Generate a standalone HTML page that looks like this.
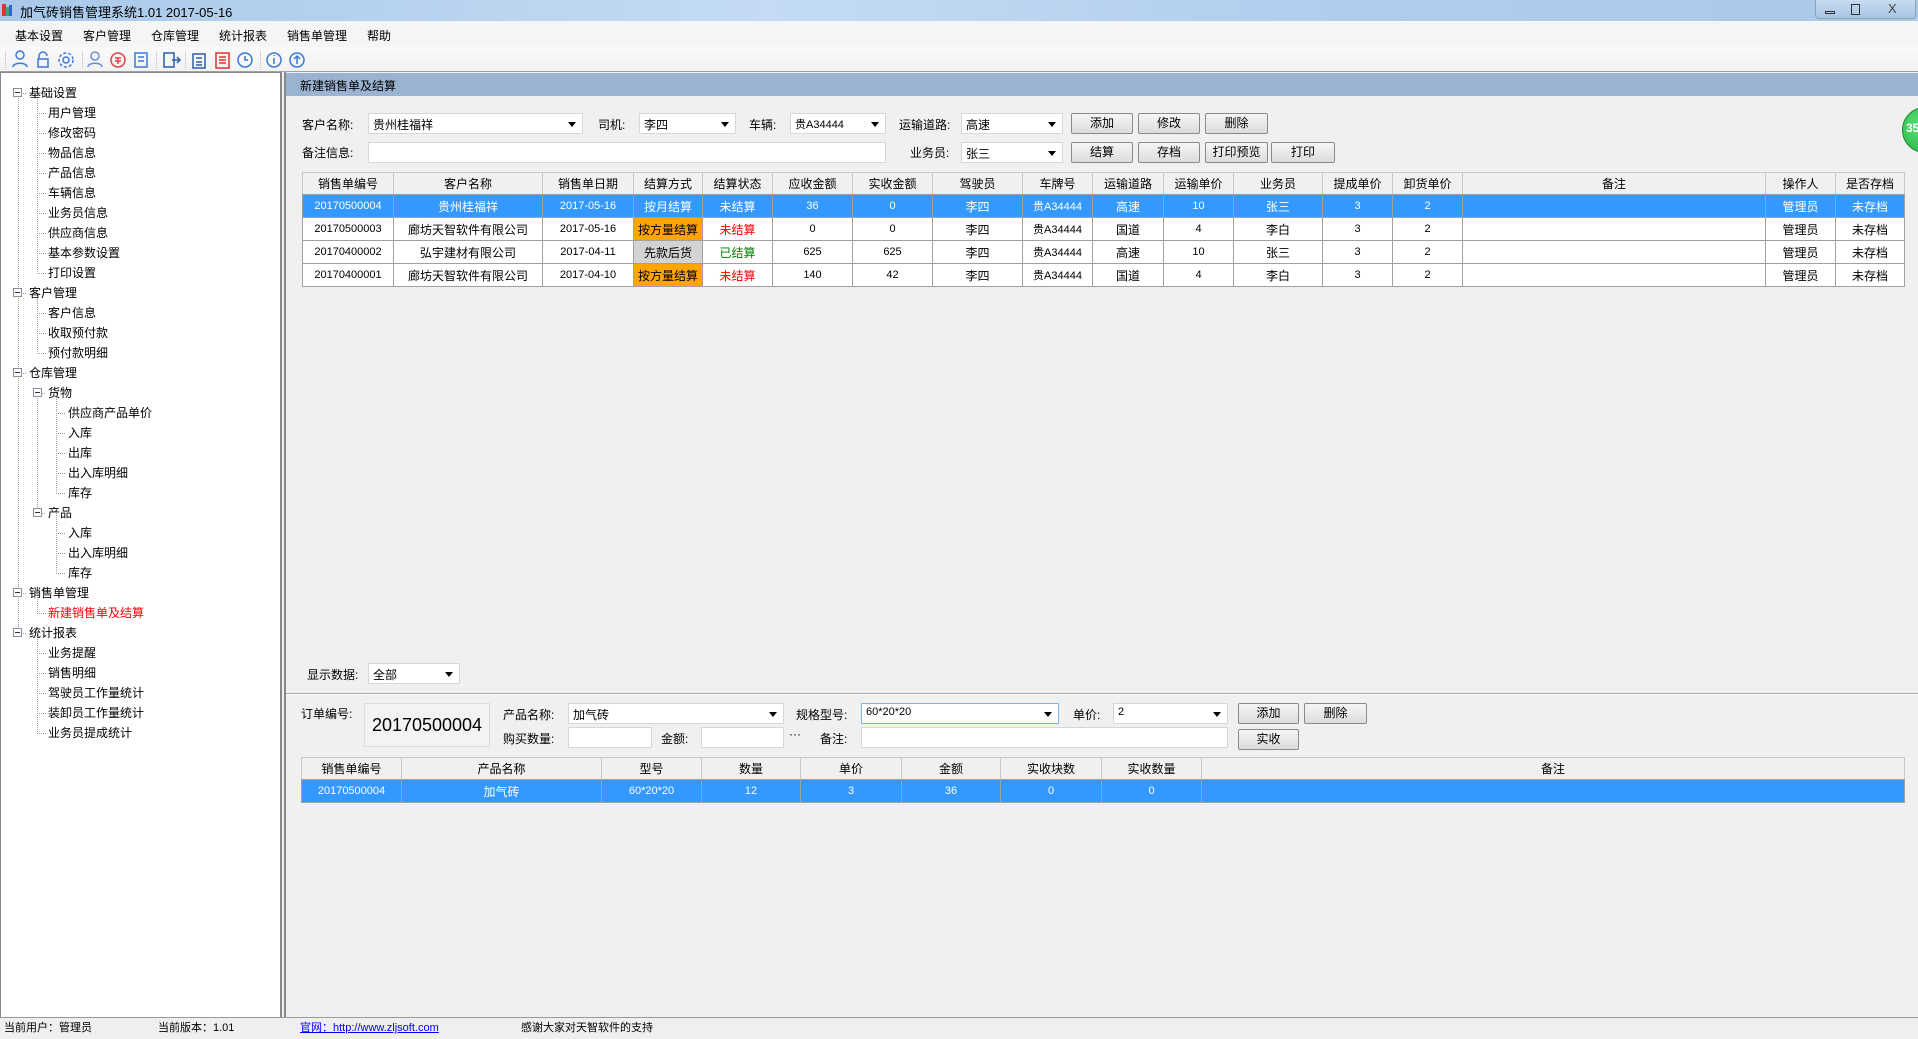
<!DOCTYPE html>
<html><head><meta charset="utf-8"><style>
*{margin:0;padding:0;box-sizing:border-box}
body{width:1918px;height:1039px;position:relative;overflow:hidden;background:#f0f0f0;font-family:"Liberation Sans","Noto Sans CJK SC",sans-serif;font-size:12px;color:#000}
.a{position:absolute;white-space:nowrap}
.title{left:0;top:0;width:1918px;height:21px;background:linear-gradient(90deg,#a9c8ea,#c4dbf3 40%,#b0cdee 70%,#a9c8ea);}
.menu{left:0;top:21px;width:1918px;height:26px;background:#f5f5f5}
.tool{left:0;top:47px;width:1918px;height:25px;background:linear-gradient(#fafafa,#f2f2f2);border-bottom:1px solid #a0a0a0}
.side{left:0;top:72px;width:282px;height:946px;background:#fff;border:1px solid #888;border-right:2px solid #888}
.main{left:284px;top:72px;width:1634px;height:946px;border-left:2px solid #888;background:#f0f0f0}
.hdr{left:286px;top:73px;width:1632px;height:23px;background:#9ab3d1}
.combo{position:absolute;background:#fff;border:1px solid #d7d7d7;height:21px;padding:2px 4px;font-size:12px}
.combo:after{content:"";position:absolute;right:6px;top:8px;border-left:4px solid transparent;border-right:4px solid transparent;border-top:5px solid #000}
.inp{position:absolute;background:#fff;border:1px solid #d7d7d7;height:21px}
.btn{position:absolute;height:21px;border:1px solid #8a8a8a;border-radius:2px;background:linear-gradient(#f6f6f6,#dcdcdc);text-align:center;line-height:19px;font-size:12px}
table{border-collapse:collapse;table-layout:fixed;position:absolute;background:#fff}
td{border:1px solid #a0a0a0;text-align:center;font-size:11px;height:23px;overflow:hidden;white-space:nowrap;padding:0}
tr.h td{background:#f0f0f0;height:22px;font-size:12px;border-color:#c8c8c8 #c8c8c8 #a0a0a0}
tr.s td{background:#3399ff;color:#fff}
.or{background:#ffa500}.gr{background:#d3d3d3}.red{color:#f00}.grn{color:#008000}
.tree div{position:absolute;white-space:nowrap;font-size:12px}
.bx{position:absolute;width:9px;height:9px;border:1px solid #8a8fa0;background:#fff}
.bx:after{content:"";position:absolute;left:1px;top:3px;width:5px;height:1px;background:#333}
.st{top:1018px;height:21px;line-height:21px;font-size:11px}
</style></head><body>
<div class="a title"></div>
<div class="a" style="left:2px;top:4px;width:4px;height:12px;background:#d33"></div>
<div class="a" style="left:6px;top:7px;width:3px;height:9px;background:#3a7"></div>
<div class="a" style="left:9px;top:5px;width:3px;height:11px;background:#36c"></div>
<div class="a" style="left:20px;top:2px;font-size:13px">加气砖销售管理系统1.01 2017-05-16</div>
<div class="a" style="left:1815px;top:0;width:101px;height:19px;border:1px solid #8aa;border-top:0;border-radius:0 0 4px 4px;background:linear-gradient(#c8dcf2,#a8c4e4)"></div>
<div class="a" style="left:1825px;top:11px;width:10px;height:3px;border:1px solid #333"></div>
<div class="a" style="left:1851px;top:4px;width:9px;height:11px;border:1px solid #333"></div>
<div class="a" style="left:1888px;top:1px;font-size:13px;color:#444">X</div>
<div class="a menu"></div>
<div class="a" style="left:15px;top:27px">基本设置</div>
<div class="a" style="left:83px;top:27px">客户管理</div>
<div class="a" style="left:151px;top:27px">仓库管理</div>
<div class="a" style="left:219px;top:27px">统计报表</div>
<div class="a" style="left:287px;top:27px">销售单管理</div>
<div class="a" style="left:367px;top:27px">帮助</div>
<div class="a tool"></div>
<svg class="a" style="left:0;top:47px" width="320" height="25" fill="none" stroke-width="1.5">
<g stroke="#3a7bd5">
<circle cx="20" cy="8" r="4"/><path d="M13 20c0-5 14-5 14 0"/>
<path d="M39 12v-3a4 4 0 0 1 8 0M38 12h10v8H38z"/>
<circle cx="66" cy="13" r="3"/><circle cx="66" cy="13" r="7" stroke-dasharray="3,2"/>
<circle cx="95" cy="9" r="4" stroke="#6b8fd6"/><path d="M88 20c0-5 14-5 14 0" stroke="#6b8fd6"/>
<path d="M135 6h12v14h-12zM138 10h6M138 14h6"/>
<path d="M164 6h10v14h-10zM172 13h8M177 10l3 3-3 3" stroke="#2a5fa8"/>
<path d="M193 7h12v14h-12zM196 11h6M196 15h6M196 18h6" stroke="#2a5fa8"/>
<circle cx="245" cy="13" r="7"/><path d="M245 9v4h3"/>
<circle cx="274" cy="13" r="7"/><path d="M274 11v6M274 8v1"/>
<circle cx="297" cy="13" r="7"/><path d="M297 17v-8M294 12l3-3 3 3"/>
</g>
<circle cx="118" cy="13" r="7" stroke="#d44"/><path d="M115 11h6M115 14h6M118 11v6" stroke="#d44"/>
<path d="M216 6h13v15h-13zM219 10h7M219 13h7M219 16h7" stroke="#d33"/>
<g stroke="#bbb" stroke-width="1"><path d="M82.5 4v18M156.5 4v18M185.5 4v18M260.5 4v18M5.5 4v18" stroke-dasharray="1,1"/></g>
</svg>

<div class="a side"></div>
<svg class="a" id="lines" style="left:0;top:0" width="282" height="1017"></svg>
<div class="tree" id="t"></div>
<div class="a main"></div>
<div class="a hdr"></div>
<div class="a" style="left:300px;top:77px">新建销售单及结算</div>

<div class="a" style="left:302px;top:116px">客户名称:</div>
<div class="combo" style="left:368px;top:113px;width:215px">贵州桂福祥</div>
<div class="a" style="left:598px;top:116px">司机:</div>
<div class="combo" style="left:639px;top:113px;width:97px">李四</div>
<div class="a" style="left:749px;top:116px">车辆:</div>
<div class="combo" style="left:790px;top:113px;width:96px;font-size:11px">贵A34444</div>
<div class="a" style="left:899px;top:116px">运输道路:</div>
<div class="combo" style="left:961px;top:113px;width:102px">高速</div>
<div class="btn" style="left:1071px;top:113px;width:62px">添加</div>
<div class="btn" style="left:1138px;top:113px;width:62px">修改</div>
<div class="btn" style="left:1205px;top:113px;width:63px">删除</div>
<div class="a" style="left:302px;top:144px">备注信息:</div>
<div class="inp" style="left:368px;top:142px;width:518px"></div>
<div class="a" style="left:910px;top:144px">业务员:</div>
<div class="combo" style="left:961px;top:142px;width:102px">张三</div>
<div class="btn" style="left:1071px;top:142px;width:62px">结算</div>
<div class="btn" style="left:1138px;top:142px;width:62px">存档</div>
<div class="btn" style="left:1205px;top:142px;width:63px">打印预览</div>
<div class="btn" style="left:1271px;top:142px;width:64px">打印</div>
<div class="a" style="left:1902px;top:107px;width:46px;height:46px;border-radius:50%;background:radial-gradient(circle at 40% 40%,#5de07a,#1fae3c);border:1px solid #1a8a30"></div>
<div class="a" style="left:1906px;top:121px;color:#fff;font-size:12px;font-weight:bold">35</div>

<table style="left:302px;top:172px;width:1602px">
<colgroup><col style="width:91px"><col style="width:149px"><col style="width:91px"><col style="width:69px"><col style="width:70px"><col style="width:80px"><col style="width:80px"><col style="width:90px"><col style="width:70px"><col style="width:71px"><col style="width:70px"><col style="width:89px"><col style="width:70px"><col style="width:70px"><col style="width:303px"><col style="width:70px"><col style="width:69px"></colgroup>
<tr class="h"><td>销售单编号</td><td>客户名称</td><td>销售单日期</td><td>结算方式</td><td>结算状态</td><td>应收金额</td><td>实收金额</td><td>驾驶员</td><td>车牌号</td><td>运输道路</td><td>运输单价</td><td>业务员</td><td>提成单价</td><td>卸货单价</td><td>备注</td><td>操作人</td><td>是否存档</td></tr>
<tr class="s"><td>20170500004</td><td style="font-size:12px">贵州桂福祥</td><td>2017-05-16</td><td style="font-size:12px">按月结算</td><td style="font-size:12px">未结算</td><td>36</td><td>0</td><td style="font-size:12px">李四</td><td>贵A34444</td><td style="font-size:12px">高速</td><td>10</td><td style="font-size:12px">张三</td><td>3</td><td>2</td><td></td><td style="font-size:12px">管理员</td><td style="font-size:12px">未存档</td></tr>
<tr><td>20170500003</td><td style="font-size:12px">廊坊天智软件有限公司</td><td>2017-05-16</td><td class="or" style="font-size:12px">按方量结算</td><td class="red" style="font-size:12px">未结算</td><td>0</td><td>0</td><td style="font-size:12px">李四</td><td>贵A34444</td><td style="font-size:12px">国道</td><td>4</td><td style="font-size:12px">李白</td><td>3</td><td>2</td><td></td><td style="font-size:12px">管理员</td><td style="font-size:12px">未存档</td></tr>
<tr><td>20170400002</td><td style="font-size:12px">弘宇建材有限公司</td><td>2017-04-11</td><td class="gr" style="font-size:12px">先款后货</td><td class="grn" style="font-size:12px">已结算</td><td>625</td><td>625</td><td style="font-size:12px">李四</td><td>贵A34444</td><td style="font-size:12px">高速</td><td>10</td><td style="font-size:12px">张三</td><td>3</td><td>2</td><td></td><td style="font-size:12px">管理员</td><td style="font-size:12px">未存档</td></tr>
<tr><td>20170400001</td><td style="font-size:12px">廊坊天智软件有限公司</td><td>2017-04-10</td><td class="or" style="font-size:12px">按方量结算</td><td class="red" style="font-size:12px">未结算</td><td>140</td><td>42</td><td style="font-size:12px">李四</td><td>贵A34444</td><td style="font-size:12px">国道</td><td>4</td><td style="font-size:12px">李白</td><td>3</td><td>2</td><td></td><td style="font-size:12px">管理员</td><td style="font-size:12px">未存档</td></tr>
</table>

<div class="a" style="left:307px;top:666px">显示数据:</div>
<div class="combo" style="left:368px;top:663px;width:92px">全部</div>
<div class="a" style="left:286px;top:693px;width:1632px;height:2px;background:#a8a8a8;border-bottom:1px solid #fff"></div>
<div class="a" style="left:301px;top:705px">订单编号:</div>
<div class="a" style="left:364px;top:703px;width:126px;height:44px;border:1px solid #ddd;background:#f3f3f3;font-size:18px;text-align:center;line-height:42px">20170500004</div>
<div class="a" style="left:503px;top:706px">产品名称:</div>
<div class="combo" style="left:568px;top:703px;width:216px">加气砖</div>
<div class="a" style="left:796px;top:706px">规格型号:</div>
<div class="combo" style="left:861px;top:703px;width:198px;border-color:#7eb4ea;font-size:11px">60*20*20</div>
<div class="a" style="left:1073px;top:706px">单价:</div>
<div class="combo" style="left:1113px;top:703px;width:115px;font-size:11px">2</div>
<div class="btn" style="left:1238px;top:703px;width:61px">添加</div>
<div class="btn" style="left:1304px;top:703px;width:63px">删除</div>
<div class="a" style="left:503px;top:730px">购买数量:</div>
<div class="inp" style="left:568px;top:727px;width:84px"></div>
<div class="a" style="left:661px;top:730px">金额:</div>
<div class="inp" style="left:701px;top:727px;width:83px"></div>
<div class="a" style="left:789px;top:727px">···</div>
<div class="a" style="left:820px;top:730px">备注:</div>
<div class="inp" style="left:861px;top:727px;width:367px"></div>
<div class="btn" style="left:1238px;top:729px;width:61px">实收</div>

<table style="left:301px;top:757px;width:1603px">
<colgroup><col style="width:100px"><col style="width:200px"><col style="width:100px"><col style="width:99px"><col style="width:101px"><col style="width:99px"><col style="width:101px"><col style="width:100px"><col style="width:703px"></colgroup>
<tr class="h"><td>销售单编号</td><td>产品名称</td><td>型号</td><td>数量</td><td>单价</td><td>金额</td><td>实收块数</td><td>实收数量</td><td>备注</td></tr>
<tr class="s"><td>20170500004</td><td style="font-size:12px">加气砖</td><td>60*20*20</td><td>12</td><td>3</td><td>36</td><td>0</td><td>0</td><td></td></tr>
</table>

<div class="a" style="left:0;top:1017px;width:1918px;height:22px;background:#f0eeee;border-top:1px solid #999"></div>
<div class="a st" style="left:4px">当前用户：管理员</div>
<div class="a st" style="left:158px">当前版本：1.01</div>
<div class="a st" style="left:300px;color:#00f;text-decoration:underline">官网：http://www.zljsoft.com</div>
<div class="a st" style="left:521px">感谢大家对天智软件的支持</div>

<script>
var items=[[0,'基础设置'],[1,'用户管理'],[1,'修改密码'],[1,'物品信息'],[1,'产品信息'],[1,'车辆信息'],[1,'业务员信息'],[1,'供应商信息'],[1,'基本参数设置'],[1,'打印设置'],
[0,'客户管理'],[1,'客户信息'],[1,'收取预付款'],[1,'预付款明细'],[0,'仓库管理'],[1,'货物',1],[2,'供应商产品单价'],[2,'入库'],[2,'出库'],[2,'出入库明细'],[2,'库存'],[1,'产品',1],[2,'入库'],[2,'出入库明细'],[2,'库存'],
[0,'销售单管理'],[1,'新建销售单及结算'],[0,'统计报表'],[1,'业务提醒'],[1,'销售明细'],[1,'驾驶员工作量统计'],[1,'装卸员工作量统计'],[1,'业务员提成统计']];
var h='',tx=[29,48,68],lx=[18,37,56],p='';
items.forEach(function(it,i){var y=93+i*20,L=it[0];
 h+='<div style="left:'+tx[L]+'px;top:'+(y-9)+'px'+(it[1]=='新建销售单及结算'?';color:#f00':'')+'">'+it[1]+'</div>';
 if(L==0||it[2]){var bx=L==0?13:33;h+='<div class="bx" style="left:'+bx+'px;top:'+(y-5)+'px"></div>';}
 var hx=lx[L]+(L==0||it[2]?5:0);p+='M'+hx+' '+(y+.5)+'H'+(tx[L]-2);
 // vertical line to next sibling or last sibling
 var last=-1;for(var j=i+1;j<items.length;j++){if(items[j][0]<L)break;if(items[j][0]==L)last=j;}
 if(last>0)p+='M'+(lx[L]+.5)+' '+(y+(L==0||it[2]?5:0))+'V'+(93+last*20-(items[last][0]==0||items[last][2]?5:0));
 if(L>0&&!it[2]){var prevSib=false;for(var k=i-1;k>=0;k--){if(items[k][0]<L){ p+='M'+(lx[L]+.5)+' '+(93+k*20+(items[k][2]||items[k][0]==0&&L==1?0:0))+'V'+y;break;} if(items[k][0]==L)break;}}
});
document.getElementById('t').innerHTML=h;
document.getElementById('lines').innerHTML='<path d="'+p+'" stroke="#a0a0a0" stroke-dasharray="1,1" fill="none"/>';
</script>
</body></html>
